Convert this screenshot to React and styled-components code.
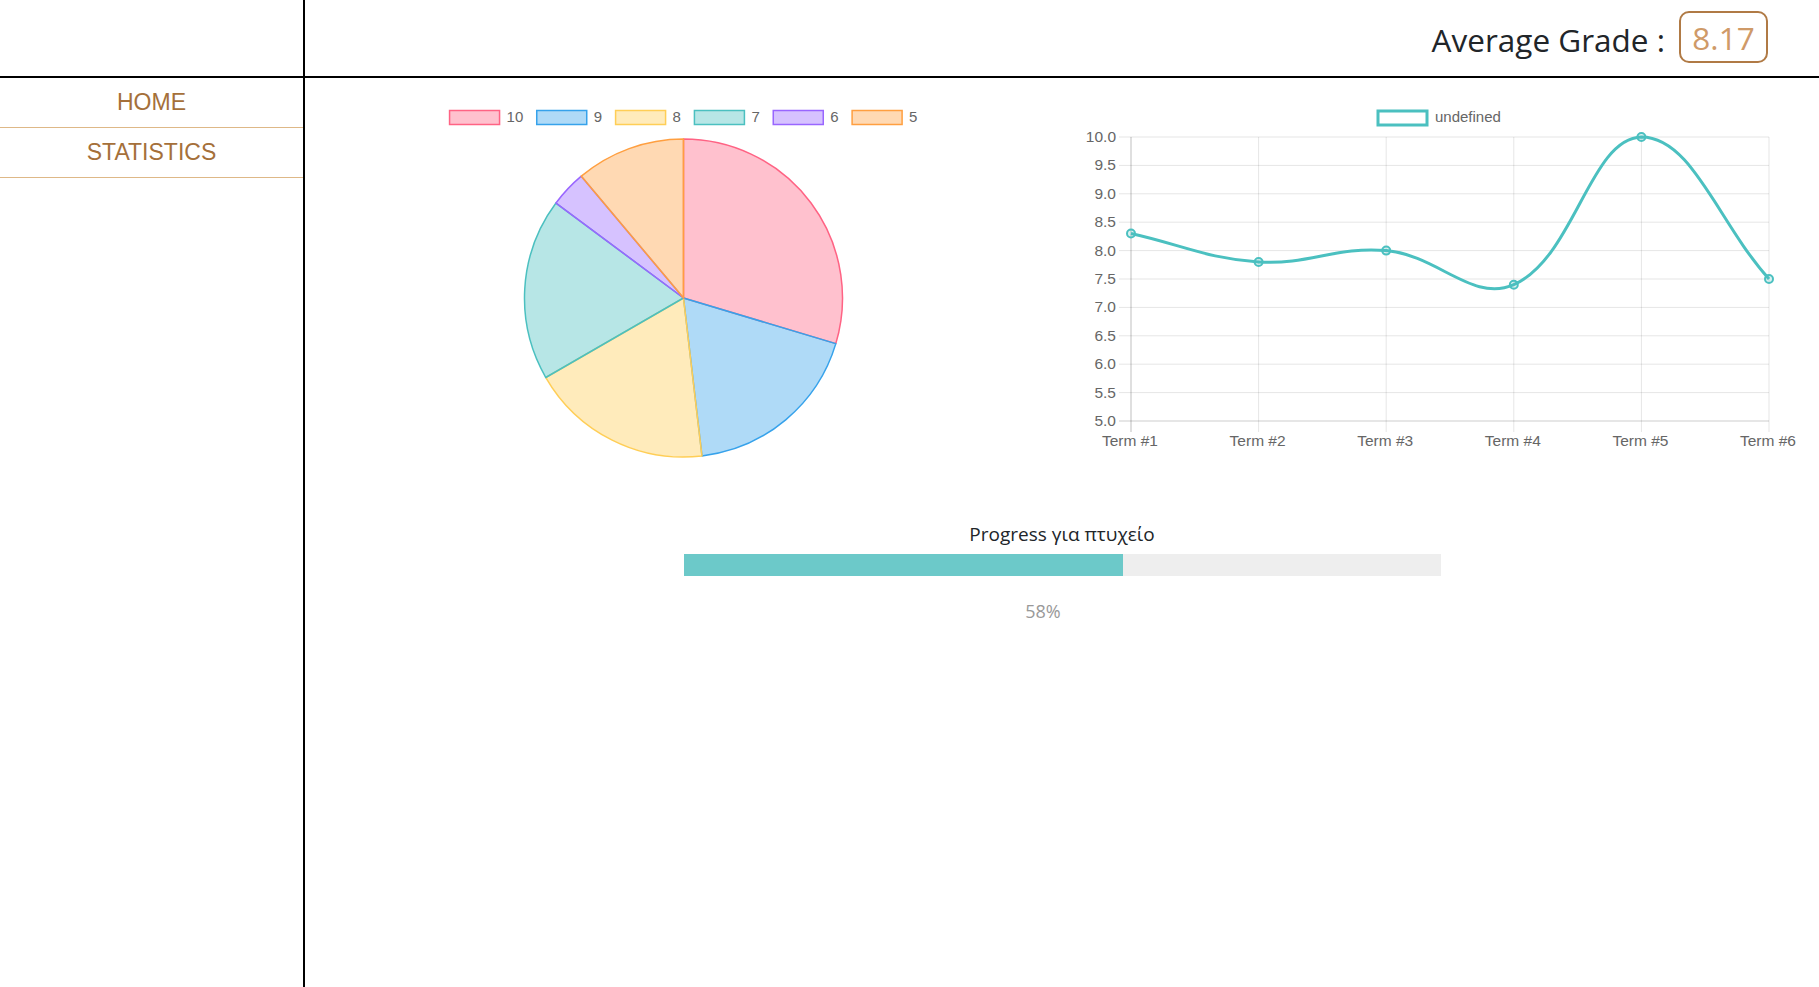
import React from "react";
import styled, { createGlobalStyle } from "styled-components";

const GlobalStyle = createGlobalStyle`
  html, body {
    margin: 0;
    padding: 0;
    background: #fff;
    font-family: "Open Sans", "Noto Sans", sans-serif;
    color: #212529;
  }
`;

const Page = styled.div`
  display: flex;
  min-height: 100vh;
`;

const Sidebar = styled.aside`
  width: 303px;
  flex-shrink: 0;
  border-right: 2px solid #000;
  display: flex;
  flex-direction: column;
`;

const SideTop = styled.div`
  height: 76px;
  border-bottom: 2px solid #000;
`;

const NavItem = styled.a`
  display: flex;
  align-items: center;
  justify-content: center;
  height: 49px;
  border-bottom: 1px solid #deb887;
  font-family: "Liberation Sans", Arial, sans-serif;
  font-size: 23px;
  color: #a5703a;
  text-decoration: none;
  cursor: pointer;
`;

const Main = styled.div`
  flex: 1;
  display: flex;
  flex-direction: column;
`;

const Header = styled.header`
  height: 76px;
  border-bottom: 2px solid #000;
  display: flex;
  align-items: center;
  justify-content: flex-end;
  gap: 14px;
  padding-right: 51px;
`;

const GradeLabel = styled.span`
  font-size: 31.5px;
  color: #212529;
  margin-top: 2px;
`;

const GradeBox = styled.span`
  display: flex;
  align-items: center;
  justify-content: center;
  box-sizing: border-box;
  width: 89px;
  height: 52px;
  margin-top: -2px;
  border: 2px solid #b07a45;
  border-radius: 10px;
  font-size: 31.5px;
  color: #cf9a68;
`;

const ChartsRow = styled.section`
  display: grid;
  grid-template-columns: 1fr 1fr;
`;

const ChartSvg = styled.svg`
  display: block;
  width: 100%;
  height: 400px;
  font-family: "Liberation Sans", Arial, sans-serif;
`;

const ProgressBlock = styled.section`
  display: flex;
  flex-direction: column;
  align-items: center;
  margin-top: 44px;
`;

const ProgressTitle = styled.div`
  font-size: 19px;
  line-height: 24px;
  color: #212529;
`;

const Track = styled.div`
  width: 50%;
  height: 22px;
  margin-top: 8px;
  background: #eeeeee;
`;

const Fill = styled.div`
  height: 100%;
  background: #6cc9c9;
`;

const Percent = styled.div`
  margin-top: 23px;
  margin-right: 38px;
  font-size: 18px;
  line-height: 24px;
  color: #999;
`;

const W = 757;

const pieData = [
  { label: "10", value: 8, color: "255,99,132" },
  { label: "9", value: 5, color: "54,162,235" },
  { label: "8", value: 5, color: "255,206,86" },
  { label: "7", value: 5, color: "75,192,192" },
  { label: "6", value: 1, color: "153,102,255" },
  { label: "5", value: 3, color: "255,159,64" },
];

function PieChart() {
  const cx = W / 2;
  const cy = 220;
  const r = 159;
  const total = pieData.reduce((s, d) => s + d.value, 0);
  let angle = -Math.PI / 2;
  const slices = pieData.map((d) => {
    const a0 = angle;
    const a1 = angle + (d.value / total) * Math.PI * 2;
    angle = a1;
    const x0 = cx + r * Math.cos(a0);
    const y0 = cy + r * Math.sin(a0);
    const x1 = cx + r * Math.cos(a1);
    const y1 = cy + r * Math.sin(a1);
    const large = a1 - a0 > Math.PI ? 1 : 0;
    return { ...d, path: `M${cx},${cy} L${x0},${y0} A${r},${r} 0 ${large} 1 ${x1},${y1} Z` };
  });

  // legend items: box 50 wide, 7 gap, text, 13.5 spacing
  const charW = (t) => t.length * 8.34;
  const items = pieData.map((d) => 50 + 7 + charW(d.label));
  const legendW = items.reduce((s, w) => s + w, 0) + 13.5 * (items.length - 1);
  let lx = cx - legendW / 2;

  return (
    <ChartSvg viewBox={`0 0 ${W} 400`}>
      {pieData.map((d, i) => {
        const x = lx;
        lx += items[i] + 13.5;
        return (
          <g key={d.label}>
            <rect x={x} y={32.5} width={50} height={14} fill={`rgba(${d.color},0.4)`} stroke={`rgb(${d.color})`} strokeWidth={1.5} />
            <text x={x + 57} y={40} fontSize={15} fill="#666" dominantBaseline="middle">{d.label}</text>
          </g>
        );
      })}
      {slices.map((s) => (
        <path key={s.label} d={s.path} fill={`rgba(${s.color},0.4)`} stroke={`rgb(${s.color})`} strokeWidth={1.5} strokeLinejoin="round" />
      ))}
    </ChartSvg>
  );
}

const lineValues = [8.3, 7.8, 8.0, 7.4, 10.0, 7.5];

function LineChart() {
  const left = 69;
  const right = 707;
  const top = 59;
  const bottom = 343;
  const step = (right - left) / (lineValues.length - 1);
  const yOf = (v) => top + ((10 - v) / 5) * (bottom - top);
  const pts = lineValues.map((v, i) => ({ x: left + i * step, y: yOf(v) }));

  // bezier control points like chart.js (tension 0.4), kept inside the chart area
  const t = 0.4;
  const clampX = (x) => Math.min(right, Math.max(left, x));
  const clampY = (y) => Math.min(bottom, Math.max(top, y));
  const ctrl = pts.map((p, i) => {
    const prev = pts[i - 1] || p;
    const next = pts[i + 1] || p;
    const d01 = Math.hypot(p.x - prev.x, p.y - prev.y);
    const d12 = Math.hypot(next.x - p.x, next.y - p.y);
    const s01 = d01 + d12 ? d01 / (d01 + d12) : 0;
    const s12 = d01 + d12 ? d12 / (d01 + d12) : 0;
    const fa = t * s01;
    const fb = t * s12;
    return {
      px: clampX(p.x - fa * (next.x - prev.x)),
      py: clampY(p.y - fa * (next.y - prev.y)),
      nx: clampX(p.x + fb * (next.x - prev.x)),
      ny: clampY(p.y + fb * (next.y - prev.y)),
    };
  });
  let d = `M${pts[0].x},${pts[0].y}`;
  for (let i = 1; i < pts.length; i++) {
    d += ` C${ctrl[i - 1].nx},${ctrl[i - 1].ny} ${ctrl[i].px},${ctrl[i].py} ${pts[i].x},${pts[i].y}`;
  }

  const yTicks = [];
  for (let v = 10; v >= 5; v -= 0.5) yTicks.push(v);

  return (
    <ChartSvg viewBox={`0 0 ${W} 400`}>
      <rect x={316} y={33} width={49} height={14} fill="#fff" stroke="rgb(75,192,192)" strokeWidth={3} />
      <text x={373} y={40} fontSize={15} fill="#666" dominantBaseline="middle">undefined</text>

      {yTicks.map((v) => (
        <g key={v}>
          <line x1={left - 12} x2={right} y1={yOf(v)} y2={yOf(v)} stroke={v === 5 ? "rgba(0,0,0,0.2)" : "rgba(0,0,0,0.1)"} strokeWidth={1} />
          <text x={left - 15} y={yOf(v) + 1} fontSize={15.5} fill="#666" textAnchor="end" dominantBaseline="middle">{v.toFixed(1)}</text>
        </g>
      ))}
      {pts.map((p, i) => (
        <g key={i}>
          <line x1={p.x} x2={p.x} y1={top} y2={bottom + 11} stroke={i === 0 ? "rgba(0,0,0,0.25)" : "rgba(0,0,0,0.1)"} strokeWidth={1} />
          <text x={p.x - 1} y={364} fontSize={15.5} fill="#666" textAnchor="middle" dominantBaseline="middle">{`Term #${i + 1}`}</text>
        </g>
      ))}

      <path d={d} fill="none" stroke="rgb(75,192,192)" strokeWidth={3} />
      {pts.map((p, i) => (
        <circle key={i} cx={p.x} cy={p.y} r={4} fill="rgba(75,192,192,0.2)" stroke="rgb(75,192,192)" strokeWidth={2} />
      ))}
    </ChartSvg>
  );
}

export default function App() {
  const progress = 58;
  return (
    <>
      <GlobalStyle />
      <Page>
        <Sidebar>
          <SideTop />
          <NavItem>HOME</NavItem>
          <NavItem>STATISTICS</NavItem>
        </Sidebar>
        <Main>
          <Header>
            <GradeLabel>Average Grade :</GradeLabel>
            <GradeBox>8.17</GradeBox>
          </Header>
          <ChartsRow>
            <PieChart />
            <LineChart />
          </ChartsRow>
          <ProgressBlock>
            <ProgressTitle>Progress για πτυχείο</ProgressTitle>
            <Track>
              <Fill style={{ width: `${progress}%` }} />
            </Track>
            <Percent>{progress}%</Percent>
          </ProgressBlock>
        </Main>
      </Page>
    </>
  );
}
